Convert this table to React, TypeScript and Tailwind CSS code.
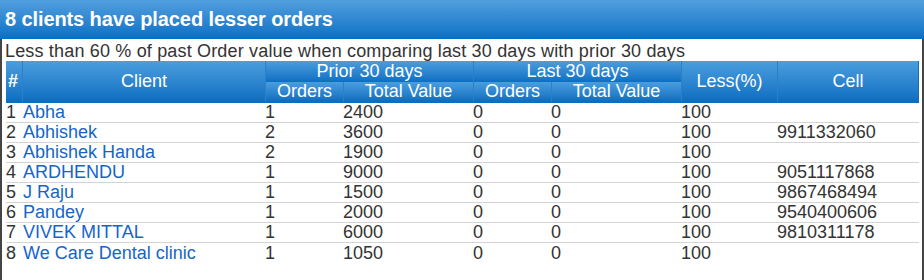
const rows = [
  { n: 1, name: 'Abha', po: 1, pv: 2400, lo: 0, lv: 0, less: 100, cell: '' },
  { n: 2, name: 'Abhishek', po: 2, pv: 3600, lo: 0, lv: 0, less: 100, cell: '9911332060' },
  { n: 3, name: 'Abhishek Handa', po: 2, pv: 1900, lo: 0, lv: 0, less: 100, cell: '' },
  { n: 4, name: 'ARDHENDU', po: 1, pv: 9000, lo: 0, lv: 0, less: 100, cell: '9051117868' },
  { n: 5, name: 'J Raju', po: 1, pv: 1500, lo: 0, lv: 0, less: 100, cell: '9867468494' },
  { n: 6, name: 'Pandey', po: 1, pv: 2000, lo: 0, lv: 0, less: 100, cell: '9540400606' },
  { n: 7, name: 'VIVEK MITTAL', po: 1, pv: 6000, lo: 0, lv: 0, less: 100, cell: '9810311178' },
  { n: 8, name: 'We Care Dental clinic', po: 1, pv: 1050, lo: 0, lv: 0, less: 100, cell: '' },
];

const th = 'p-0 font-normal text-white text-center bg-gradient-to-b from-[#4a9edd] to-[#0a6fc3] border-l border-[#2a80c9]';

export default function App() {
  return (
    <div className="w-[924px] h-[280px] bg-white font-['Liberation_Sans',Arial,sans-serif] text-[18px] text-[#333] overflow-hidden">
      <div className="h-[39px] flex items-center pl-[5px] bg-gradient-to-b from-[#4f9fdd] to-[#0070c6]">
        <h1 className="text-[20px] leading-[23px] font-bold text-white tracking-[-0.1px]">8 clients have placed lesser orders</h1>
      </div>
      <div className="h-[241px] border-x-2 border-[#444]">
        <p className="pt-[2px] pl-[3px] leading-[20px] tracking-[0.17px]">
          Less than 60 % of past Order value when comparing last 30 days with prior 30 days
        </p>
        <table className="ml-[4px] w-[913px] table-fixed border-separate border-spacing-0 leading-[19px]">
          <colgroup>
            <col className="w-[16px]" />
            <col className="w-[243px]" />
            <col className="w-[78px]" />
            <col className="w-[130px]" />
            <col className="w-[78px]" />
            <col className="w-[130px]" />
            <col className="w-[96px]" />
            <col className="w-[142px]" />
          </colgroup>
          <thead>
            <tr className="h-[21px]">
              <th rowSpan={2} className="p-0 pl-[2px] font-bold text-white text-left bg-gradient-to-b from-[#4a9edd] to-[#0a6fc3] border-b-2 border-[#0a6fc3]">#</th>
              <th rowSpan={2} className={`${th} border-b-2 border-b-[#0a6fc3]`}>Client</th>
              <th colSpan={2} className={th}>Prior 30 days</th>
              <th colSpan={2} className={th}>Last 30 days</th>
              <th rowSpan={2} className={`${th} border-b-2 border-b-[#0a6fc3]`}>Less(%)</th>
              <th rowSpan={2} className={`${th} border-r border-r-[#1a6db5] border-b-2 border-b-[#0a6fc3]`}>Cell</th>
            </tr>
            <tr className="h-[20px]">
              <th className={`${th} border-b-2 border-b-[#0a6fc3]`}>Orders</th>
              <th className={`${th} border-b-2 border-b-[#0a6fc3]`}>Total Value</th>
              <th className={`${th} border-b-2 border-b-[#0a6fc3]`}>Orders</th>
              <th className={`${th} border-b-2 border-b-[#0a6fc3]`}>Total Value</th>
            </tr>
          </thead>
          <tbody>
            {rows.map((r, i) => {
              const td = `p-0 text-left ${i < rows.length - 1 ? 'border-b border-[#d4d4d4]' : ''}`;
              return (
                <tr key={r.n} className="h-[20px]">
                  <td className={td}>{r.n}</td>
                  <td className={`${td} pl-[1px]`}>
                    <a href="#" className="text-[#1565c9]">{r.name}</a>
                  </td>
                  <td className={td}>{r.po}</td>
                  <td className={td}>{r.pv}</td>
                  <td className={td}>{r.lo}</td>
                  <td className={td}>{r.lv}</td>
                  <td className={td}>{r.less}</td>
                  <td className={td}>{r.cell}</td>
                </tr>
              );
            })}
          </tbody>
        </table>
      </div>
    </div>
  );
}
